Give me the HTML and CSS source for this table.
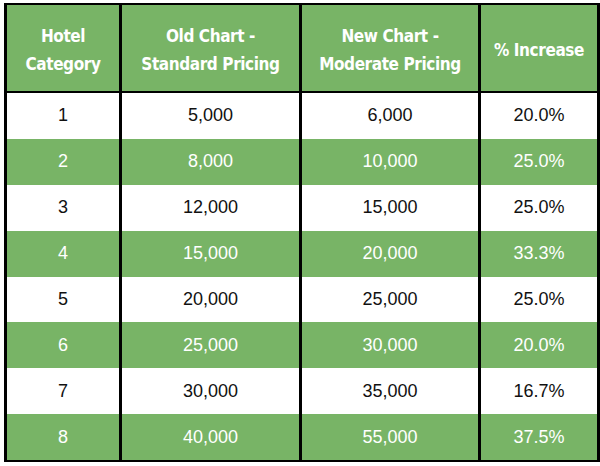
FILE: index.html
```html
<!DOCTYPE html>
<html>
<head>
<meta charset="utf-8">
<link rel="stylesheet" href="styles.css">
</head>
<body>
<table class="chart">
  <colgroup>
    <col class="c1"><col class="c2"><col class="c3"><col class="c4">
  </colgroup>
  <thead>
    <tr>
      <th>Hotel<br>Category</th>
      <th>Old Chart -<br>Standard Pricing</th>
      <th>New Chart -<br>Moderate Pricing</th>
      <th>% Increase</th>
    </tr>
  </thead>
  <tbody>
    <tr><td>1</td><td>5,000</td><td>6,000</td><td>20.0%</td></tr>
    <tr class="alt"><td>2</td><td>8,000</td><td>10,000</td><td>25.0%</td></tr>
    <tr><td>3</td><td>12,000</td><td>15,000</td><td>25.0%</td></tr>
    <tr class="alt"><td>4</td><td>15,000</td><td>20,000</td><td>33.3%</td></tr>
    <tr><td>5</td><td>20,000</td><td>25,000</td><td>25.0%</td></tr>
    <tr class="alt"><td>6</td><td>25,000</td><td>30,000</td><td>20.0%</td></tr>
    <tr><td>7</td><td>30,000</td><td>35,000</td><td>16.7%</td></tr>
    <tr class="alt"><td>8</td><td>40,000</td><td>55,000</td><td>37.5%</td></tr>
  </tbody>
</table>
</body>
</html>
```
FILE: styles.css
```css
html, body {
  margin: 0;
  padding: 0;
  background: #ffffff;
}
body {
  padding: 3px 0 0 4px;
}
.chart {
  border-collapse: collapse;
  width: 593px;
  table-layout: fixed;
  border: 2px solid #000;
  box-shadow: 1px 1px 0 #c8c8c8;
}
.c1 { width: 115px; }
.c2 { width: 180px; }
.c3 { width: 179px; }
.c4 { width: 119px; }
.chart th, .chart td {
  border-left: 3px solid #000;
  border-right: 3px solid #000;
  text-align: center;
  padding: 0;
}
.chart th {
  background: #78b466;
  color: #fff;
  font-family: "DejaVu Sans Condensed", "Liberation Sans", sans-serif;
  font-weight: bold;
  font-size: 17px;
  letter-spacing: -0.4px;
  line-height: 28px;
  height: 82px;
  padding-top: 4px;
  border-bottom: 2px solid #000;
}
.chart td {
  font-family: "Liberation Sans", Arial, sans-serif;
  font-size: 18px;
  height: 45.9px;
  color: #111;
  background: #fff;
}
.chart tr.alt td {
  background: #78b466;
  color: #fff;
}
```
